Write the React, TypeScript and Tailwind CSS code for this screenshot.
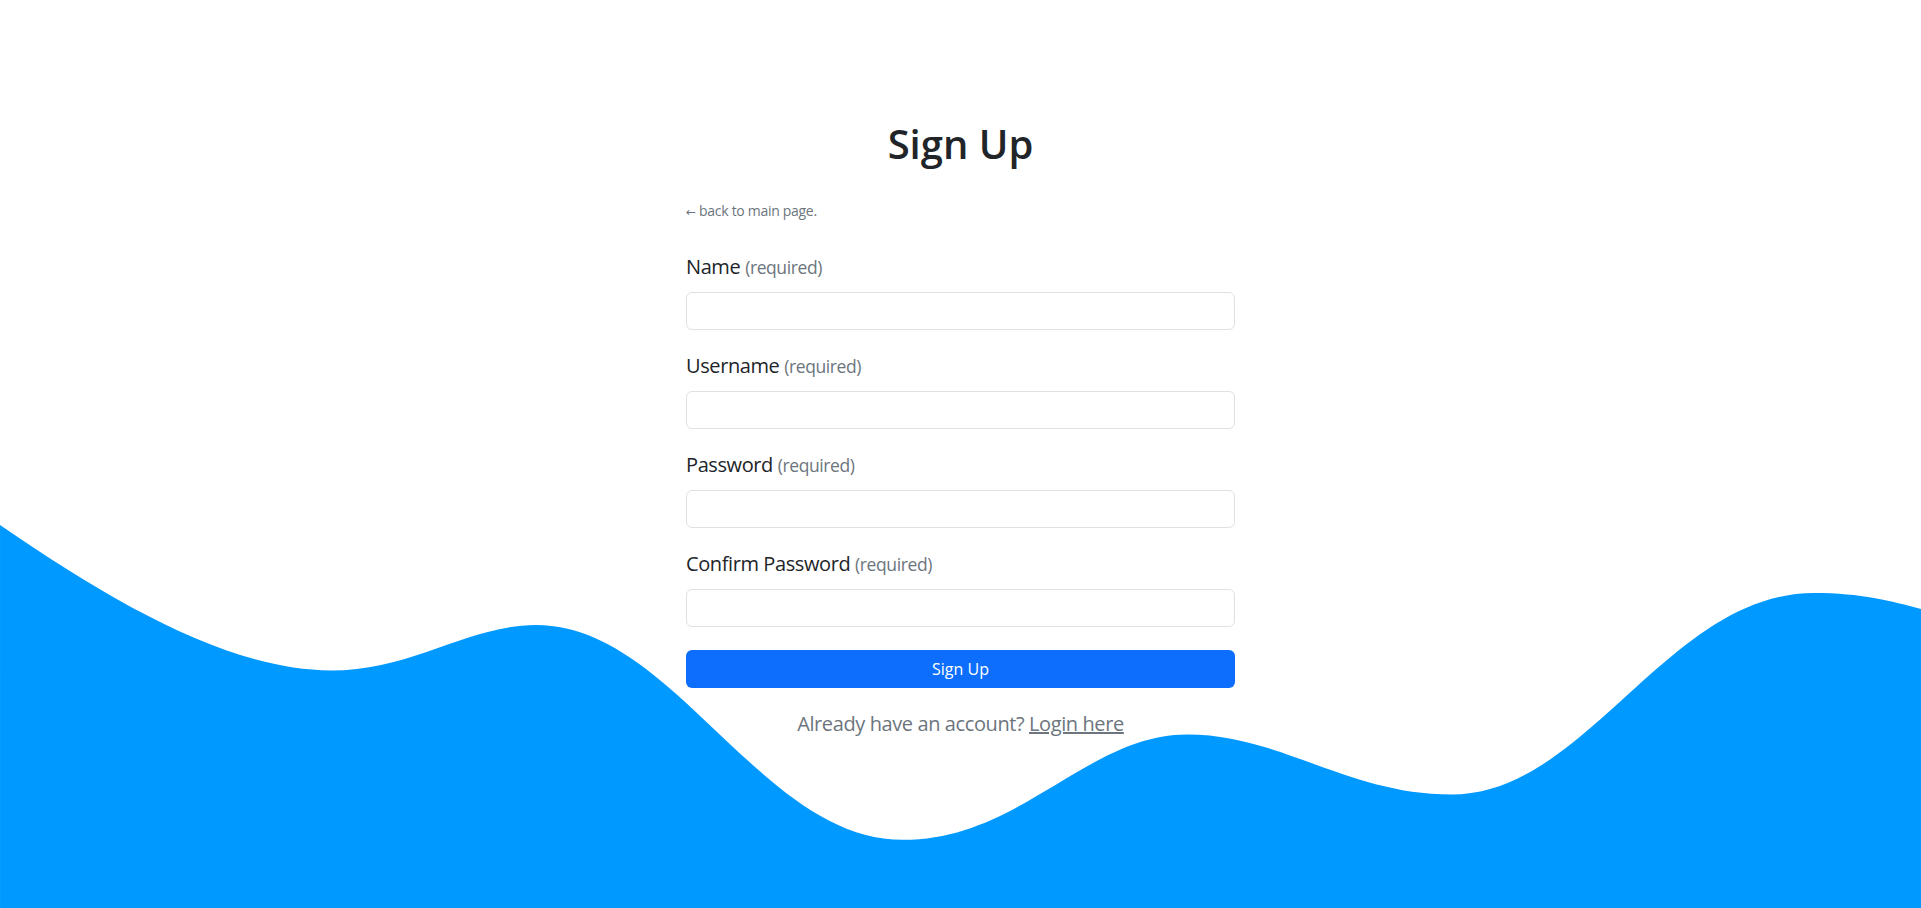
import type { ReactNode } from "react";

function Field({ label, type = "text" }: { label: string; type?: string }) {
  return (
    <div className="mb-[21px]">
      <label className="mb-[10px] block text-[20px] leading-[30px] tracking-[-0.4px] text-[#212529]">
        {label} <small className="text-[17.5px] text-[#6c757d]">(required)</small>
      </label>
      <input
        type={type}
        className="block h-[38px] w-full rounded-[6px] border border-[#dee2e6] bg-white px-3 text-base text-[#212529] outline-none"
      />
    </div>
  );
}

function Wave() {
  return (
    <svg
      className="absolute bottom-0 left-0 w-full"
      viewBox="0 0 1440 320"
      xmlns="http://www.w3.org/2000/svg"
    >
      <path
        fill="#0099ff"
        d="M0,33 C90,95 175,142 248,142 C310,142 350,108 402,108 C505,108 570,269 677,269 C765,269 815,190 890,190 C960,190 1010,235 1088,235 C1190,235 1250,84 1360,84 C1395,84 1418,90 1440,96 L1440,320 L0,320 Z"
      />
    </svg>
  );
}

function Page({ children }: { children: ReactNode }) {
  return (
    <div className="relative h-[908px] overflow-hidden bg-white font-['Open_Sans',sans-serif]">
      <Wave />
      <div className="relative z-10">{children}</div>
    </div>
  );
}

export default function App() {
  return (
    <Page>
      <div className="mx-auto w-[549px] pt-[120px]">
        <h1 className="text-center text-[40px] font-semibold leading-[48px] text-[#212529]">Sign Up</h1>
        <a href="#" className="mt-[32px] block text-[14px] leading-[21px] tracking-[-0.3px] text-[#6c757d] no-underline">
          <span className="font-['DejaVu_Sans',sans-serif] text-[12px]">←</span> back to main page.
        </a>
        <form className="mt-[29px]" onSubmit={(e) => e.preventDefault()}>
          <Field label="Name" />
          <Field label="Username" />
          <Field label="Password" type="password" />
          <Field label="Confirm Password" type="password" />
          <button
            type="submit"
            className="mt-[2px] h-[38px] w-full rounded-[6px] bg-[#0d6efd] text-base text-white"
          >
            Sign Up
          </button>
        </form>
        <p className="mt-[21px] text-center text-[20px] leading-[30px] tracking-[-0.4px] text-[#6c757d]">
          Already have an account?{" "}
          <a href="#" className="text-[#6c757d] underline">
            Login here
          </a>
        </p>
      </div>
    </Page>
  );
}
